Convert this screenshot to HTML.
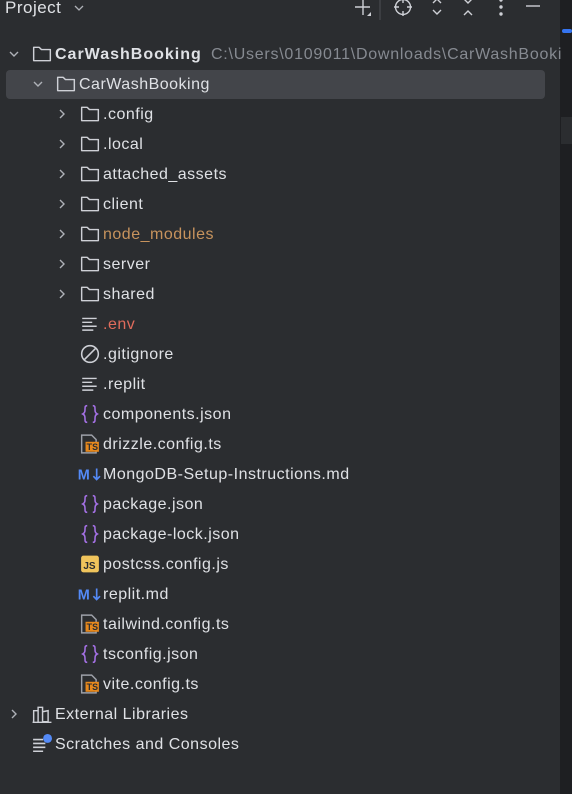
<!DOCTYPE html>
<html><head><meta charset="utf-8"><style>
html,body{margin:0;padding:0;}
body{width:572px;height:794px;background:#2b2d30;position:relative;overflow:hidden;font-family:"Liberation Sans",sans-serif;color:#dfe1e5;font-size:16px;letter-spacing:0.5px;}
.r{position:absolute;left:0;height:30px;line-height:30px;white-space:nowrap;}
.r svg{position:absolute;}
.t{position:absolute;top:2px;}
.sel{position:absolute;left:6px;top:70px;width:539px;height:29px;background:#43454a;border-radius:4px;}
.strip{position:absolute;left:560px;top:0;width:12px;height:794px;background:#1e1f22;}
</style></head><body>
<div class="strip"></div>
<div style="position:absolute;left:562px;top:29px;width:10px;height:4px;background:#3574f0;border-radius:2px"></div>
<div style="position:absolute;left:561px;top:117px;width:11px;height:27px;background:#2b2d30"></div>
<div class="sel"></div>

<div style="position:absolute;left:5px;top:-3px;font-size:17px;line-height:22px;color:#dfe1e5">Project</div>
<svg style="position:absolute;left:73px;top:3px" width="12" height="10"><path d="M2 3l4 4 4-4" stroke="#aeb1b7" stroke-width="1.3" fill="none"/></svg>
<svg style="position:absolute;left:350px;top:0" width="200" height="20" fill="none" stroke="#ced0d6" stroke-width="1.4">
<path d="M13 0v15M5 7h15"/><path d="M21 12v4h-4z" fill="#ced0d6" stroke="none"/>
<path d="M30 0v20" stroke="#43454a"/>
<circle cx="53" cy="7" r="7.5"/><path d="M53-2v5M53 11v5M44 7h5M57 7h5"/>
<path d="M83 3l4-4 4 4M83 10l4 4 4-4"/>
<path d="M114-1l4 4 4-4M114 15l4-4 4 4"/>
<circle cx="151" cy="0" r="1" fill="#ced0d6"/><circle cx="151" cy="7" r="1" fill="#ced0d6"/><circle cx="151" cy="14" r="1" fill="#ced0d6"/>
<path d="M176 6h14"/>
</svg>

<div id="tree"></div>
<script>
const rows=[
[0,'f','CarWashBooking',1,'root'],
[1,'f','CarWashBooking',1],
[2,'f','.config',0],[2,'f','.local',0],[2,'f','attached_assets',0],[2,'f','client',0],[2,'f','node_modules',0,'nm'],[2,'f','server',0],[2,'f','shared',0],
[2,'txt','.env',-1,'env'],[2,'ign','.gitignore',-1],[2,'txt','.replit',-1],[2,'json','components.json',-1],[2,'ts','drizzle.config.ts',-1],[2,'md','MongoDB-Setup-Instructions.md',-1],[2,'json','package.json',-1],[2,'json','package-lock.json',-1],[2,'js','postcss.config.js',-1],[2,'md','replit.md',-1],[2,'ts','tailwind.config.ts',-1],[2,'json','tsconfig.json',-1],[2,'ts','vite.config.ts',-1],
[0,'lib','External Libraries',0],[0,'scr','Scratches and Consoles',-1]
];
const icons={
f:'<path d="M1.5 3h5l2 2h8v10h-15z" stroke="#ced0d6" stroke-width="1.3" fill="none" stroke-linejoin="round"/>',
txt:'<path d="M2 4h13M2 7.5h9M2 11h13M2 14.5h10" stroke="#ced0d6" stroke-width="1.3"/>',
ign:'<circle cx="9" cy="9" r="7.5" stroke="#ced0d6" stroke-width="1.4" fill="none"/><path d="M4 14l10-10" stroke="#ced0d6" stroke-width="1.4"/>',
json:'<path d="M6.5 1.5c-2 0-2 1-2 3s0 3.5-2 4.5c2 1 2 2.5 2 4.5s0 3 2 3M11.5 1.5c2 0 2 1 2 3s0 3.5 2 4.5c-2 1-2 2.5-2 4.5s0 3-2 3" stroke="#a571e6" stroke-width="1.4" fill="none"/>',
ts:'<path d="M1.5 1h9l4 4v12h-13z" stroke="#9da0a8" stroke-width="1.3" fill="none"/><rect x="5" y="7" width="12" height="9" fill="#e8891c"/><text x="6" y="14.5" font-size="8" font-weight="bold" fill="#2b2d30" font-family="Liberation Sans" letter-spacing="0">TS</text>',
js:'<rect x="1" y="1.5" width="16" height="15" rx="2" fill="#f0c45c"/><text x="3" y="13.5" font-size="9" font-weight="bold" fill="#2b2d30" font-family="Liberation Sans" letter-spacing="0">JS</text>',
md:'<text x="-2" y="14" font-size="13" font-weight="bold" fill="#548af7" font-family="Liberation Sans" letter-spacing="0">M</text><path d="M15 4v10M12 11l3 3 3-3" stroke="#548af7" stroke-width="1.5" fill="none"/>',
lib:'<path d="M1.5 16V6h4v10M5.5 16V3h4v13M9.5 16V7l5-1v10zM0.5 16.5h17" stroke="#ced0d6" stroke-width="1.3" fill="none"/>',
scr:'<path d="M1 5h9M1 8.5h11M1 12h11M1 15.5h9" stroke="#ced0d6" stroke-width="1.4"/><circle cx="14" cy="4" r="4" fill="#548af7"/>'
};
let h='';
rows.forEach((r,i)=>{
 const [lv,ic,name,ch,cls]=r;
 const top=38+30*i;
 const base=lv===0?0:(lv===1?24:48);
 const cx=base+8, ix=base+32, tx=base+55;
 let s=`<div class="r" style="top:${top}px;width:572px">`;
 if(ch===1) s+=`<svg style="left:${cx}px;top:11px" width="12" height="10"><path d="M2 3l4 4 4-4" stroke="#aeb1b7" stroke-width="1.4" fill="none"/></svg>`;
 if(ch===0) s+=`<svg style="left:${cx}px;top:10px" width="12" height="12"><path d="M4 2l4 4-4 4" stroke="#aeb1b7" stroke-width="1.4" fill="none"/></svg>`;
 s+=`<svg style="left:${ix}px;top:6px" width="20" height="20" viewBox="0 0 18 18" overflow="visible">${icons[ic]}</svg>`;
 let st='';
 if(cls==='root') st='font-weight:bold;letter-spacing:1px;';
 if(cls==='nm') st='color:#c7935d;';
 if(cls==='env') st='color:#e06c5c;';
 s+=`<span class="t" style="left:${tx}px;${st}">${name}</span>`;
 if(cls==='root') s+=`<span class="t" style="left:211px;color:#868a91;letter-spacing:0.75px">C:\\Users\\0109011\\Downloads\\CarWashBooki</span>`;
 s+='</div>';
 h+=s;
});
document.getElementById('tree').innerHTML=h;
</script>
</body></html>
